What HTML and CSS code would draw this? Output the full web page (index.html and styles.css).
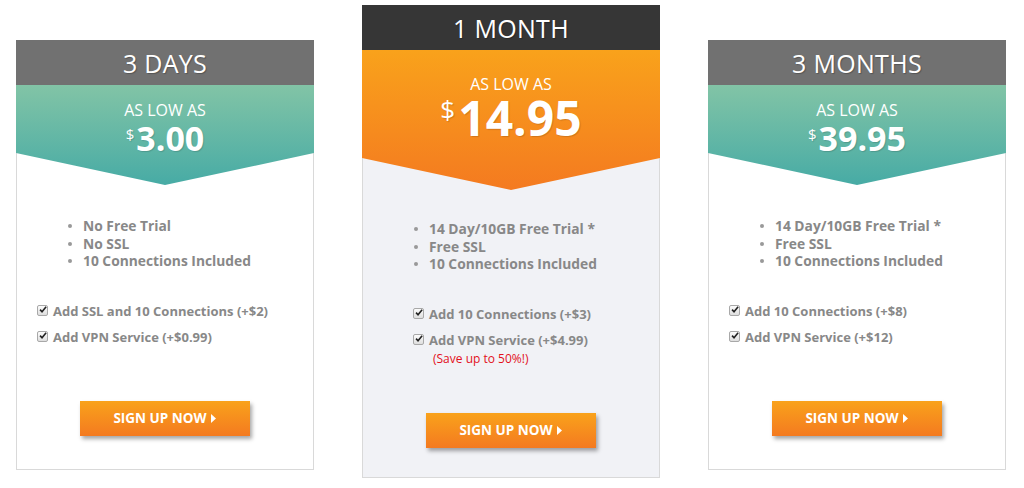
FILE: index.html
```html
<!DOCTYPE html>
<html lang="en">
<head>
<meta charset="utf-8">
<title>Plans</title>
<link rel="stylesheet" href="styles.css">
</head>
<body>
<div class="plans">
  <div class="plan side">
    <div class="plan-title grey">3 DAYS</div>
    <div class="plan-price green">
      <div class="low">AS LOW AS</div>
      <div class="amount"><span class="cur">$</span>3.00</div>
    </div>
    <ul class="features">
      <li>No Free Trial</li>
      <li>No SSL</li>
      <li>10 Connections Included</li>
    </ul>
    <div class="addons">
      <div class="addon"><span class="box"><svg width="9" height="9" viewBox="0 0 9 9"><path d="M1.2 4.6 L3.4 7 L8 1.4" fill="none" stroke="#222" stroke-width="1.8"/></svg></span>Add SSL and 10 Connections (+$2)</div>
      <div class="addon"><span class="box"><svg width="9" height="9" viewBox="0 0 9 9"><path d="M1.2 4.6 L3.4 7 L8 1.4" fill="none" stroke="#222" stroke-width="1.8"/></svg></span>Add VPN Service (+$0.99)</div>
    </div>
    <a class="btn" href="#">SIGN UP NOW<svg width="6" height="9" viewBox="0 0 6 9"><path d="M0 0 L5 4.5 L0 9 Z" fill="#fff"/></svg></a>
  </div>

  <div class="plan featured">
    <div class="plan-title dark">1 MONTH</div>
    <div class="plan-price orange">
      <div class="low">AS LOW AS</div>
      <div class="amount big"><span class="cur">$</span>14.95</div>
    </div>
    <ul class="features">
      <li>14 Day/10GB Free Trial *</li>
      <li>Free SSL</li>
      <li>10 Connections Included</li>
    </ul>
    <div class="addons">
      <div class="addon"><span class="box"><svg width="9" height="9" viewBox="0 0 9 9"><path d="M1.2 4.6 L3.4 7 L8 1.4" fill="none" stroke="#222" stroke-width="1.8"/></svg></span>Add 10 Connections (+$3)</div>
      <div class="addon"><span class="box"><svg width="9" height="9" viewBox="0 0 9 9"><path d="M1.2 4.6 L3.4 7 L8 1.4" fill="none" stroke="#222" stroke-width="1.8"/></svg></span>Add VPN Service (+$4.99)</div>
      <div class="save">(Save up to 50%!)</div>
    </div>
    <a class="btn" href="#">SIGN UP NOW<svg width="6" height="9" viewBox="0 0 6 9"><path d="M0 0 L5 4.5 L0 9 Z" fill="#fff"/></svg></a>
  </div>

  <div class="plan side">
    <div class="plan-title grey">3 MONTHS</div>
    <div class="plan-price green">
      <div class="low">AS LOW AS</div>
      <div class="amount"><span class="cur">$</span>39.95</div>
    </div>
    <ul class="features">
      <li>14 Day/10GB Free Trial *</li>
      <li>Free SSL</li>
      <li>10 Connections Included</li>
    </ul>
    <div class="addons">
      <div class="addon"><span class="box"><svg width="9" height="9" viewBox="0 0 9 9"><path d="M1.2 4.6 L3.4 7 L8 1.4" fill="none" stroke="#222" stroke-width="1.8"/></svg></span>Add 10 Connections (+$8)</div>
      <div class="addon"><span class="box"><svg width="9" height="9" viewBox="0 0 9 9"><path d="M1.2 4.6 L3.4 7 L8 1.4" fill="none" stroke="#222" stroke-width="1.8"/></svg></span>Add VPN Service (+$12)</div>
    </div>
    <a class="btn" href="#">SIGN UP NOW<svg width="6" height="9" viewBox="0 0 6 9"><path d="M0 0 L5 4.5 L0 9 Z" fill="#fff"/></svg></a>
  </div>
</div>
</body>
</html>
```

FILE: styles.css
```css
html, body {
  margin: 0;
  padding: 0;
  background: #fff;
}
body {
  font-family: "Open Sans", "Liberation Sans", sans-serif;
}
.plans {
  display: flex;
  align-items: flex-start;
  gap: 48px;
  padding: 5px 0 0 16px;
}
.plan {
  width: 298px;
  box-sizing: border-box;
  border: 1px solid #d9d9d9;
  border-top: none;
  display: flex;
  flex-direction: column;
  background: #fff;
}
.plan.side {
  margin-top: 35px;
  height: 430px;
}
.plan.featured {
  height: 473px;
  background: #f1f2f6;
}
.plan-title {
  height: 45px;
  margin: 0 -1px;
  display: flex;
  align-items: center;
  justify-content: center;
  color: #fff;
  font-size: 25px;
  letter-spacing: 0.3px;
  text-shadow: 1px 1px 1px rgba(0,0,0,0.25);
}
.plan-title.grey { background: #717171; }
.plan-title.dark { background: #363636; }
.plan-price {
  margin: 0 -1px;
  color: #fff;
  text-align: center;
  clip-path: polygon(0 0, 100% 0, 100% calc(100% - 32px), 50% 100%, 0 calc(100% - 32px));
}
.plan-price.green {
  height: 100px;
  background: linear-gradient(#82c4a6, #47aba5);
}
.plan-price.orange {
  height: 140px;
  background: linear-gradient(#f9a21b, #f47a20);
}
.low {
  font-size: 16px;
  line-height: 20px;
  padding-top: 15px;
}
.orange .low { padding-top: 24px; }
.amount {
  font-size: 34px;
  font-weight: 700;
  line-height: 36px;
  text-shadow: 1px 1px 1px rgba(0,0,0,0.15);
}
.amount .cur {
  position: relative;
  top: -11px;
  font-size: 15px;
  font-weight: 400;
  margin-right: 2px;
}
.amount.big {
  font-size: 48px;
  line-height: 48px;
}
.amount.big .cur {
  top: -17px;
  font-size: 26px;
  margin-right: 3px;
}
.features {
  list-style: none;
  margin: 32px 0 0;
  padding: 0 0 0 66px;
  font-size: 13.8px;
  font-weight: 700;
  line-height: 17.5px;
  color: #888;
}
.featured .features { margin-top: 30px; }
.features li {
  position: relative;
}
.features li::before {
  content: "";
  position: absolute;
  left: -15px;
  top: 7px;
  width: 4px;
  height: 4px;
  border-radius: 50%;
  background: #999;
}
.addons {
  margin-top: 31px;
  padding-left: 20px;
}
.featured .addons { padding-left: 50px; }
.addon {
  display: flex;
  align-items: center;
  height: 20px;
  margin-bottom: 6px;
  font-size: 13px;
  font-weight: 700;
  color: #888;
}
.box {
  width: 11px;
  height: 11px;
  box-sizing: border-box;
  border: 1px solid #a8a8a8;
  border-radius: 2px;
  background: linear-gradient(#fcfcfc, #dedede);
  margin-right: 5px;
  display: flex;
  align-items: center;
  justify-content: center;
}
.box svg { margin-top: -2px; margin-left: 1px; }
.save {
  margin-top: -5px;
  padding-left: 20px;
  font-size: 12px;
  line-height: 16px;
  color: #e3101b;
}
.btn {
  display: flex;
  align-items: center;
  justify-content: center;
  gap: 4px;
  width: 170px;
  height: 35px;
  margin: 0 auto;
  margin-top: 48px;
  color: #fff;
  text-decoration: none;
  font-size: 13.5px;
  font-weight: 700;
  background: linear-gradient(#f9a21b, #f47a20);
  box-shadow: 2px 3px 4px rgba(0,0,0,0.35);
}
.featured .btn { margin-top: 46px; }
```
